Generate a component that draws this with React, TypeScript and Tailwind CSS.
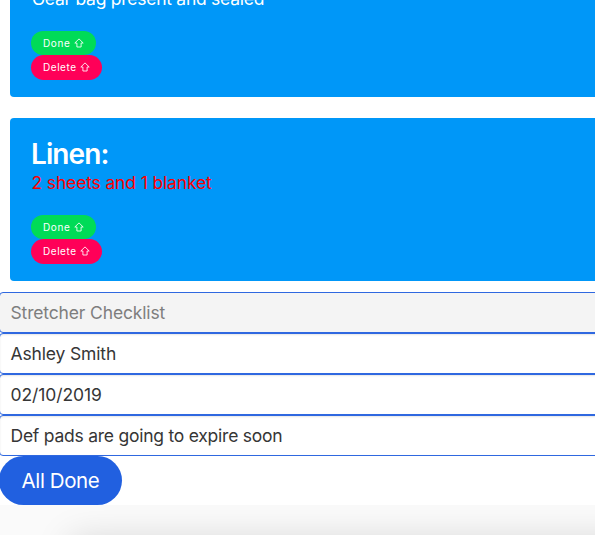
const font = "font-['Inter','Liberation_Sans',sans-serif]";

function ShiftArrow() {
  return (
    <svg className="ml-[3px] block" width="10" height="10" viewBox="0 0 10 10" fill="none" stroke="white" strokeWidth="0.85" strokeLinejoin="round">
      <path d="M5 0.9 L9.2 5 H7.1 V9 H2.9 V5 H0.8 Z" />
    </svg>
  );
}

function ItemActions() {
  const base =
    "flex items-center rounded-full pl-3 text-[10px] leading-none text-white";
  return (
    <div className="flex flex-col items-start">
      <button className={`${base} h-6 w-[65px] bg-[#00db57] tracking-[0.65px]`}>
        Done <ShiftArrow />
      </button>
      <button className={`${base} h-[25px] w-[71px] bg-[#ff0058] pb-px tracking-[0.55px]`}>
        Delete <ShiftArrow />
      </button>
    </div>
  );
}

function Field({ text, spacing, disabled }: { text: string; spacing: string; disabled?: boolean }) {
  return (
    <div
      className={`flex h-[41px] items-center rounded-[4px] border border-[#2f68e0] pl-[10.5px] pt-px text-[17.5px] ${spacing} ${
        disabled ? "bg-[#f4f4f4] text-[#7e7e7e]" : "bg-white text-[#363636] shadow-[inset_0_1px_2px_rgba(10,10,10,0.1)]"
      }`}
    >
      {text}
    </div>
  );
}

export default function App() {
  return (
    <div className={`flex h-[535px] w-[595px] flex-col overflow-hidden bg-[#fafafa] ${font}`}>
      <div className="flex h-[505px] shrink-0 flex-col overflow-hidden bg-white">
        <section className="ml-2.5 h-[97px] w-[640px] shrink-0 rounded-b-[4px] bg-[#0097f8] pl-[22px]">
          <p className="-mt-[15px] mb-[19px] h-[27px] whitespace-nowrap text-[17.5px] leading-[27px] tracking-[-0.26px] text-white">
            Gear bag present and sealed
          </p>
          <div className="-ml-px">
            <ItemActions />
          </div>
        </section>
        <section className="ml-2.5 mt-[21px] h-[163px] w-[640px] shrink-0 rounded-[4px] bg-[#0097f8] pl-[22px] pt-[21px]">
          <h2 className="-ml-px h-[30px] text-[28px] font-semibold leading-[30px] tracking-[-0.9px] text-white">Linen:</h2>
          <p className="mb-[19px] -ml-[0.5px] h-[27px] text-[17.5px] leading-[27px] tracking-[-0.15px] text-[#ff0000]">
            2 sheets and 1 blanket
          </p>
          <div className="-ml-px">
            <ItemActions />
          </div>
        </section>
        <form className="-ml-px mt-[11px] w-[640px] shrink-0">
          <Field text="Stretcher Checklist" spacing="tracking-[-0.15px]" disabled />
          <Field text="Ashley Smith" spacing="tracking-[-0.15px]" />
          <Field text="02/10/2019" spacing="tracking-[-0.1px]" />
          <Field text="Def pads are going to expire soon" spacing="tracking-[-0.24px]" />
        </form>
        <button className="-ml-px flex h-[49px] w-[123px] shrink-0 items-center justify-center rounded-full bg-[#2160e0] pt-px text-[20.5px] tracking-[-0.4px] text-white">
          All Done
        </button>
      </div>
      <footer className="h-[30px] overflow-hidden">
        <div className="ml-[70px] mt-[34px] h-10 w-[640px] shadow-[0_0_36px_rgba(0,0,0,0.15)]" />
      </footer>
    </div>
  );
}
